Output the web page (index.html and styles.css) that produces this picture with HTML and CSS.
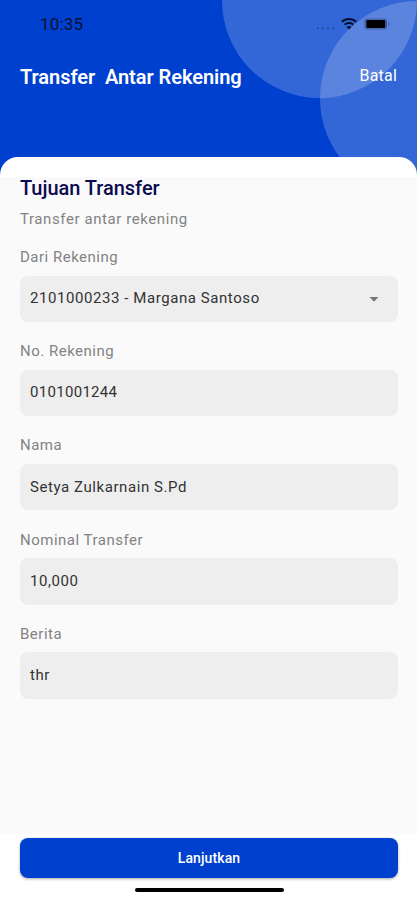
FILE: index.html
```
<!DOCTYPE html>
<html lang="id">
<head>
    <meta charset="UTF-8">
    <title>Transfer Antar Rekening</title>
    <link rel="stylesheet" href="styles.css">
</head>
<body>
    <div class="screen">
        <header class="header">
            <div class="circle circle-top"></div>
            <div class="circle circle-right"></div>
            <div class="status">
                <span class="time">10:35</span>
                <svg class="status-icons" width="76" height="16" viewBox="0 0 76 16">
                    <g fill="#1d3c8c">
                        <circle cx="2" cy="12.3" r="0.9"/>
                        <circle cx="7" cy="12.3" r="0.9"/>
                        <circle cx="12" cy="12.3" r="0.9"/>
                        <circle cx="17" cy="12.3" r="0.9"/>
                    </g>
                    <g fill="none" stroke="#04102e" stroke-width="2">
                        <path d="M25.8 5.9a10.4 10.4 0 0 1 14.4 0"/>
                        <path d="M28.6 8.8a6.4 6.4 0 0 1 8.8 0"/>
                    </g>
                    <path d="M30.5 10.9a4 4 0 0 1 5 0L33 13.6z" fill="#04102e"/>
                    <rect x="49" y="3" width="21.5" height="10" rx="2" fill="none" stroke="#3c539b"/>
                    <rect x="50.2" y="4.1" width="19.2" height="7.9" rx="1" fill="#000"/>
                    <path d="M72.2 6q2 2 0 4z" fill="#3c539b"/>
                </svg>
            </div>
            <div class="title-bar">
                <h1>Transfer  Antar Rekening</h1>
                <a class="cancel">Batal</a>
            </div>
        </header>
        <main class="sheet">
            <h2>Tujuan Transfer</h2>
            <p class="subtitle">Transfer antar rekening</p>
            <div class="field">
                <label>Dari Rekening</label>
                <div class="input">
                    <span>2101000233 - Margana Santoso</span>
                    <svg class="arrow" width="10" height="5" viewBox="0 0 10 5"><path d="M0.5 0h9L5 4.8z" fill="#757575"/></svg>
                </div>
            </div>
            <div class="field">
                <label>No. Rekening</label>
                <div class="input"><span class="digits">0101001244</span></div>
            </div>
            <div class="field">
                <label>Nama</label>
                <div class="input"><span>Setya Zulkarnain S.Pd</span></div>
            </div>
            <div class="field">
                <label>Nominal Transfer</label>
                <div class="input"><span>10,000</span></div>
            </div>
            <div class="field">
                <label>Berita</label>
                <div class="input"><span>thr</span></div>
            </div>
        </main>
        <footer class="footer">
            <button class="next">Lanjutkan</button>
            <div class="home-bar"></div>
        </footer>
    </div>
</body>
</html>
```

FILE: styles.css
```
* {
    box-sizing: border-box;
}
body {
    margin: 0;
    font-family: Roboto, sans-serif;
    background-color: #ffffff;
}
.screen {
    display: flex;
    flex-direction: column;
    height: 900px;
    overflow: hidden;
    background-color: #0040ce;
}
/* runs on behind the rounded corners of the sheet */
.header {
    position: relative;
    height: 175px;
    margin-bottom: -18px;
    flex-shrink: 0;
    overflow: hidden;
}
.circle {
    position: absolute;
    width: 195px;
    height: 195px;
    border-radius: 50%;
    background-color: rgba(255, 255, 255, 0.2);
}
.circle-top {
    left: 222px;
    top: -97px;
}
.circle-right {
    left: 320px;
    top: 1px;
}
.status, .title-bar {
    position: relative;
    display: flex;
    justify-content: space-between;
}
.status {
    height: 48px;
    padding: 15px 25px 0 40px;
}
.status-icons {
    margin-top: 1px;
}
.time {
    font-size: 17px;
    line-height: 18px;
    letter-spacing: 0.2px;
    color: #04102e;
}
.title-bar {
    padding: 15px 20px 0;
    color: #ffffff;
}
h1 {
    margin: 0;
    font-size: 20px;
    line-height: 29px;
    font-weight: 600;
    letter-spacing: -0.05px;
    white-space: pre;
}
.cancel {
    font-size: 16px;
    line-height: 25px;
    letter-spacing: 0.2px;
}
.sheet {
    position: relative;
    height: 677px;
    flex-shrink: 0;
    padding: 19px 19px 0 20px;
    border-radius: 18px 18px 0 0;
    background: linear-gradient(#ffffff 20px, #fafafa 20px);
}
h2 {
    margin: 0;
    font-size: 20px;
    line-height: 24px;
    font-weight: 500;
    letter-spacing: -0.03px;
    color: #0b0b50;
}
.subtitle {
    margin: 9px 0 0;
    font-size: 15px;
    line-height: 20px;
    letter-spacing: 0.58px;
    color: #838383;
}
.field {
    margin-bottom: 19.2px;
}
.subtitle + .field {
    margin-top: 18px;
}
label {
    display: block;
    height: 28.5px;
    font-size: 15px;
    line-height: 20px;
    letter-spacing: 0.5px;
    color: #838383;
}
.input {
    display: flex;
    align-items: center;
    justify-content: space-between;
    height: 46.5px;
    padding: 0 19px 1px 10px;
    border-radius: 8px;
    background-color: #eeeeee;
    font-size: 15px;
    letter-spacing: 0.57px;
    color: #333333;
}
.digits {
    letter-spacing: 0.3px;
}
.arrow {
    margin-top: 2px;
}
.footer {
    flex: 1;
    padding: 4px 19px 0 20px;
    background-color: #ffffff;
}
.next {
    display: block;
    width: 100%;
    height: 40px;
    padding: 0 0 1px;
    border: 0;
    border-radius: 8px;
    background-color: #0040ce;
    box-shadow: 0 1px 3px rgba(0, 0, 0, 0.35);
    font-family: inherit;
    font-size: 14px;
    font-weight: 500;
    letter-spacing: 0.1px;
    color: #ffffff;
}
.home-bar {
    width: 149px;
    height: 4px;
    margin: 10px auto 0;
    border-radius: 2px;
    background-color: #000000;
}
```
